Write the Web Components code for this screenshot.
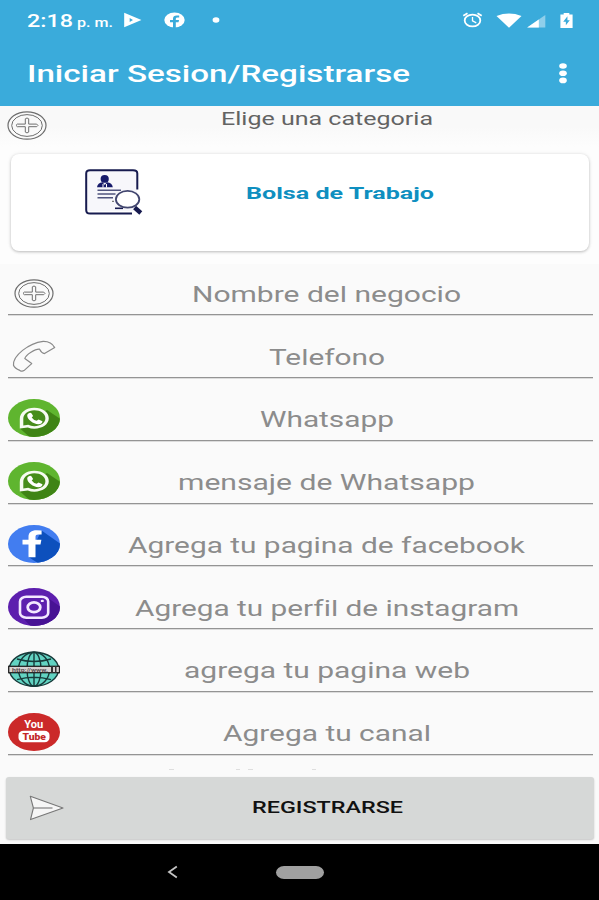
<!DOCTYPE html>
<html lang="es">
<head>
<meta charset="utf-8">
<meta name="viewport" content="width=device-width, initial-scale=1">
<title>Iniciar Sesion/Registrarse</title>
<style>
  html, body {
    margin: 0;
    height: 100%;
    overflow: hidden;
    font-family: Roboto, "Liberation Sans", sans-serif;
    background: #fafafa;
  }
</style>
</head>
<body>
<business-app></business-app>

<script>
const ICONS = {
  plus: `<svg viewBox="0 0 52 38" fill="none" stroke="#6e6e6e">
    <ellipse cx="26" cy="19.5" rx="19" ry="13.7" stroke-width="1.2"/>
    <ellipse cx="26" cy="19.5" rx="15.3" ry="10.9" stroke-width="1"/>
    <path stroke-width="1" d="M24.3 12.8q1.7-1.6 3.4 0v5.3h8q2.6 1.3 0 2.6h-8v5.4q-1.7 1.6-3.4 0v-5.4h-8q-2.6-1.3 0-2.6h8z"/></svg>`,
  phone: `<svg viewBox="0 0 52 38" fill="none" stroke="#8a8a8a" stroke-width="1.2" stroke-linejoin="round">
    <path d="M5.5 28.2C4.8 18.6 20.5 6.2 35.2 4.3C41 4.2 44.3 6 46.7 10.6L36.5 16.6C34.3 16.3 32.7 14.4 31.6 12.2C27.3 11.8 17.8 17.4 16.8 21.6L23.7 26.6L16 33.6Q14 34.8 11.8 33.4C8.4 31.9 6.3 30.5 5.5 28.2Z"/></svg>`,
  whatsapp: `<svg viewBox="0 0 52 38">
    <defs><clipPath id="c"><ellipse cx="26" cy="19" rx="26" ry="18.9"/></clipPath></defs>
    <ellipse cx="26" cy="19" rx="26" ry="18.9" fill="#5fb52f"/>
    <path clip-path="url(#c)" fill="#3f8415" d="M39 11L60 25V42H26L12 29.5Z"/>
    <path fill="#f7fbf2" d="M11.8 29.6V20C11.8 13.5 18 8.8 26.3 8.8S40.8 13.4 40.8 19.3S34.4 29.7 26.3 29.7Q22.8 29.7 19.8 28.5Z"/>
    <path fill="#478d1b" d="M15.3 26.5V19.8C15.3 15 20 11.3 26.3 11.3S37.4 14.8 37.4 19.3S32.5 27.2 26.3 27.2Q23 27.2 20.2 25.8Z"/>
    <path fill="#fff" d="M20.8 14.2q1.6-.7 2.6 0l1.6 2.6q-.2 1.1-1.3 1.7q1.5 2.4 5 3.3l1.8-1.2l4 1.6q-.4 3-4.1 3.1C25 24.9 19.5 20.7 19.2 16.8Q19.1 15.1 20.8 14.2Z"/></svg>`,
  facebook: `<svg viewBox="0 0 52 38">
    <defs><clipPath id="c"><ellipse cx="26" cy="19" rx="26" ry="18.9"/></clipPath></defs>
    <ellipse cx="26" cy="19" rx="26" ry="18.9" fill="#427df0"/>
    <path clip-path="url(#c)" fill="#0d50bd" d="M33.5 5.5L60 24V42H36L20.5 32Z"/>
    <path fill="#fff" d="M20.5 32.3V19.5H14.5V14.8H20.5V11.8C20.5 7.4 23.4 5.2 28.6 5.2Q31.5 5.2 33.6 5.6V9.4H30.4Q27.5 9.4 27.5 11.8V14.8H33.4L32.5 19.5H27.5V32.3Z"/></svg>`,
  instagram: `<svg viewBox="0 0 52 38">
    <defs><clipPath id="c"><ellipse cx="26" cy="19" rx="26" ry="18.9"/></clipPath></defs>
    <ellipse cx="26" cy="19" rx="26" ry="18.9" fill="#5d1fae"/>
    <path clip-path="url(#c)" fill="#471294" d="M40 10L60 24V42H26L14 29Z"/>
    <rect x="12" y="8.7" width="28.2" height="21" rx="6.3" ry="4.8" fill="#5d1fae" stroke="#f4e8ff" stroke-width="2.6"/>
    <ellipse cx="26" cy="19.3" rx="6.3" ry="4.9" fill="none" stroke="#f4e8ff" stroke-width="2.8"/>
    <ellipse cx="34.3" cy="12.9" rx="1.6" ry="1.2" fill="#f4e8ff"/></svg>`,
  globe: `<svg viewBox="0 0 52 38">
    <g fill="#62d3c2" stroke="#173a3a" stroke-width="1.4">
      <ellipse cx="26" cy="19.2" rx="24.6" ry="17"/>
      <g fill="none"><ellipse cx="26" cy="19.2" rx="15.5" ry="17"/>
      <ellipse cx="26" cy="19.2" rx="7" ry="17"/>
      <path d="M26 2v34M9 9q17 5 34 0M9 29.7q17-5 34 0"/></g>
    </g>
    <rect x=".7" y="16.3" width="50.8" height="6.4" fill="#d8d2d2" stroke="#222" stroke-width="1.3"/>
    <text x="4" y="21.5" font-size="5.6" font-weight="700" fill="#5c4d50" textLength="36" lengthAdjust="spacingAndGlyphs">http://www.</text>
    <path fill="#333" d="M43 16h2v7h-2zM47 16h1.5v7H47z"/></svg>`,
  youtube: `<svg viewBox="0 0 52 38">
    <ellipse cx="26" cy="19" rx="26" ry="18.9" fill="#cb2929"/>
    <text x="16.3" y="15.4" font-size="11.4" font-weight="700" fill="#fff" textLength="19" lengthAdjust="spacingAndGlyphs">You</text>
    <rect x="10.5" y="17.8" width="31" height="11.4" rx="5" ry="4.2" fill="#fff"/>
    <text x="14.5" y="26.5" font-size="8.4" font-weight="900" fill="#c32828" textLength="23.5" lengthAdjust="spacingAndGlyphs">Tube</text></svg>`,
  resume: `<svg viewBox="0 0 60 50" fill="none" stroke="#171b4f">
    <path fill="#f7f7fb" stroke="none" d="M4 4h50v40H4z"/>
    <path stroke-width="2" d="M54.3 22.5V6.5Q54.3 3.3 50 3.3H7Q3.2 3.3 3.2 6.5V43Q3.2 46.6 7 46.6H49"/>
    <ellipse cx="21.7" cy="11.9" rx="4.1" ry="3.9" fill="#171b6b" stroke="none"/>
    <path fill="#171b6b" stroke="none" d="M14 20.3Q14.6 15.6 19.6 15.3L21.7 18L24 15.3Q29.2 15.6 29.8 20.3Z"/>
    <path stroke="#fff" stroke-width="1" d="M20 17v3.5M23.5 17v3.5"/>
    <path stroke="#51557f" stroke-width="1.5" d="M14.5 23.3H38M14.5 26.9H32.5M14.5 30.8H30"/>
    <path stroke="#777" stroke-width="1.2" d="M29 34.3h2"/>
    <path stroke-width="1.6" d="M32 41.3h8"/>
    <ellipse cx="44.6" cy="32.3" rx="11.7" ry="8.4" fill="#fff" stroke="#42466f" stroke-width="1.8"/>
    <path stroke-width="4.4" d="M51.6 40.5L57.8 46"/></svg>`,
  send: `<svg viewBox="0 0 36 26" fill="#f6f6f6" stroke="#777" stroke-width="1.1" stroke-linejoin="round">
    <path d="M1.3 1.3L34 13L1.5 24.6L4.4 13Z"/><path d="M4.4 13H23.5"/></svg>`,
  play: `<svg viewBox="0 0 19 17"><path fill="#fff" d="M.7.8L19 8.5L.7 16.2Z"/><path fill="#3aabdb" d="M6.5 6.4L10 8.5L6.5 10.6Z"/></svg>`,
  fbround: `<svg viewBox="0 0 21 16"><ellipse cx="10.5" cy="8" rx="10.2" ry="7.4" fill="#fff"/>
    <path fill="#3aabdb" d="M9 16v-5.7H6V8h3V6.6Q9 3.4 12.8 3.4h2.4v2h-1.7q-1.7 0-1.7 1.3V8h3.3l-.6 2.3h-2.7V16z"/></svg>`,
  dot: `<svg viewBox="0 0 8 6"><ellipse cx="4" cy="3" rx="3.4" ry="2.7" fill="#fff"/></svg>`,
  alarm: `<svg viewBox="0 0 22 17" fill="none" stroke="#fff"><ellipse cx="11" cy="9" rx="8.3" ry="6.3" stroke-width="1.9"/>
    <path stroke-width="1.9" d="M1.2 4.1L5.7 1.2M20.8 4.1L16.3 1.2"/><path stroke-width="1.4" d="M11 5.3v4.2l4 2"/></svg>`,
  wifi: `<svg viewBox="0 0 26 15"><path fill="#fff" d="M.5 2.9Q13-2 25.5 2.9L13 14.7Z"/></svg>`,
  signal: `<svg viewBox="0 0 20 14"><path fill="#8fcfeb" d="M20 0v13.5H.5Z"/><path fill="#fff" d="M13 4.8v8.7H.5Z"/></svg>`,
  battery: `<svg viewBox="0 0 13 16"><path fill="#fff" d="M3.5 0h6v1.5H13V16H0V1.5h3.5z"/><path fill="#3aabdb" d="M7.5 3.5L3 9.2h2.8V13L10 7.8H7.5z"/></svg>`,
  more: `<svg viewBox="0 0 8 21" fill="#fff"><ellipse cx="4" cy="3" rx="3.8" ry="2.8"/><ellipse cx="4" cy="10.2" rx="3.8" ry="2.8"/><ellipse cx="4" cy="17.4" rx="3.8" ry="2.8"/></svg>`,
  back: `<svg viewBox="0 0 11 14" fill="none" stroke="#c4c4c4" stroke-width="1.8"><path d="M9.8 1.5L2 7l7.8 5.5"/></svg>`
};

class AppIcon extends HTMLElement {
  connectedCallback() {
    if (!this.shadowRoot) this.attachShadow({ mode: 'open' });
    this.shadowRoot.innerHTML = `
      <style>
        :host { display: block; flex: none; }
        svg { display: block; width: 100%; height: 100%; }
      </style>
      ${ICONS[this.getAttribute('name')] || ''}
    `;
  }
}

customElements.define('app-icon', AppIcon);

// Text widened horizontally until it fills the given width.
class WideText extends HTMLElement {
  constructor() {
    super();
    this.attachShadow({ mode: 'open' });
    this.shadowRoot.innerHTML = `
      <style>
        :host { display: block; flex: none; line-height: 1; }
        span { display: inline-block; white-space: nowrap; transform-origin: 0 50%; font-variant-ligatures: none; }
      </style>
      <span><slot></slot></span>
    `;
  }

  connectedCallback() {
    const width = Number(this.getAttribute('width'));
    const span = this.shadowRoot.querySelector('span');
    this.style.width = width + 'px';
    const natural = span.getBoundingClientRect().width;
    if (natural) span.style.transform = `scaleX(${width / natural})`;
  }
}

customElements.define('wide-text', WideText);

class StatusBar extends HTMLElement {
  constructor() {
    super();
    this.attachShadow({ mode: 'open' });
    this.shadowRoot.innerHTML = `
      <style>
        :host { display: flex; align-items: center; height: 40px; padding: 0 26px 0 27px; color: #fff; box-sizing: border-box; }
        .clock { display: flex; align-items: baseline; flex: none; gap: 4px; padding-top: 4px; font-weight: 500; }
        .time { font-size: 17.5px; }
        .half { font-size: 12.5px; }
        .notes { display: flex; align-items: center; flex: none; gap: 22px; margin-left: 9px; }
        .system { display: flex; align-items: center; margin-left: auto; }
      </style>
      <div class="clock">
        <wide-text class="time" width="46">2:18</wide-text>
        <wide-text class="half" width="36">p. m.</wide-text>
      </div>
      <div class="notes">
        <app-icon name="play" style="width:19px;height:16px;margin-left:1px"></app-icon>
        <app-icon name="fbround" style="width:21px;height:16px"></app-icon>
        <app-icon name="dot" style="width:8px;height:6px;margin-left:5px"></app-icon>
      </div>
      <div class="system">
        <app-icon name="alarm" style="width:21px;height:16px"></app-icon>
        <app-icon name="wifi" style="width:26px;height:15px;margin-left:13px"></app-icon>
        <app-icon name="signal" style="width:20px;height:13px;margin:2px 0 0 4px"></app-icon>
        <app-icon name="battery" style="width:13px;height:15px;margin:1px 0 0 14px"></app-icon>
      </div>
    `;
  }
}

customElements.define('status-bar', StatusBar);

class AppBar extends HTMLElement {
  constructor() {
    super();
    this.attachShadow({ mode: 'open' });
    this.shadowRoot.innerHTML = `
      <style>
        :host { display: flex; align-items: center; justify-content: space-between; height: 66px; padding: 0 32px 0 27px; box-sizing: border-box; color: #fff; font-size: 24px; font-weight: 500; }
        wide-text { padding-top: 2px; }
        app-icon { width: 8px; height: 21px; }
      </style>
      <wide-text width="383"><slot></slot></wide-text>
      <app-icon name="more"></app-icon>
    `;
  }
}

customElements.define('app-bar', AppBar);

class CategoryCard extends HTMLElement {
  constructor() {
    super();
    this.attachShadow({ mode: 'open' });
    this.shadowRoot.innerHTML = `
      <style>
        :host { display: block; height: 117px; padding: 7px 10px 13px 11px; box-sizing: border-box; background: #fdfdfd; }
        .card { display: flex; align-items: flex-start; height: 97px; padding: 13px 0 0 72px; box-sizing: border-box; background: #fff; border-radius: 8px; box-shadow: 0 1px 3px rgba(0, 0, 0, 0.24), 0 0 5px rgba(0, 0, 0, 0.06); }
        app-icon { width: 60px; height: 50px; }
        wide-text { margin: 18px 0 0 103px; color: #0f8fc0; font-size: 17px; font-weight: 700; }
      </style>
      <div class="card">
        <app-icon name="resume"></app-icon>
        <wide-text width="188"><slot></slot></wide-text>
      </div>
    `;
  }
}

customElements.define('category-card', CategoryCard);

class FieldRow extends HTMLElement {
  connectedCallback() {
    if (this.shadowRoot) return;
    this.attachShadow({ mode: 'open' });
    this.shadowRoot.innerHTML = `
      <style>
        :host { display: flex; align-items: flex-end; flex: none; height: 62.75px; margin: 0 6px 0 8px; padding-bottom: 2.5px; box-sizing: border-box; border-bottom: 1px solid #949494; box-shadow: 0 1px 0 #dcdcdc; }
        app-icon { width: 52px; height: 38px; }
        .hint { display: flex; justify-content: center; flex: 1; padding-bottom: 6.5px; color: #8c8c8c; font-size: 21.5px; }
      </style>
      <app-icon name="${this.getAttribute('icon')}"></app-icon>
      <div class="hint"><wide-text width="${this.getAttribute('width')}"><slot></slot></wide-text></div>
    `;
  }
}

customElements.define('field-row', FieldRow);

class SubmitButton extends HTMLElement {
  constructor() {
    super();
    this.attachShadow({ mode: 'open' });
    this.shadowRoot.innerHTML = `
      <style>
        :host { display: block; padding: 6px 5px 5px 6px; }
        button { display: flex; align-items: center; width: 100%; height: 62px; padding: 0 0 0 23px; border: 0; border-radius: 3px; background: #d6d8d7; box-shadow: 0 1px 2px rgba(0, 0, 0, 0.22); color: #111; font: 500 16.5px Roboto, sans-serif; }
        app-icon { width: 36px; height: 26px; margin-bottom: 1px; }
        wide-text { margin: 1px 0 0 187px; text-align: left; }
      </style>
      <button type="button">
        <app-icon name="send"></app-icon>
        <wide-text width="151"><slot></slot></wide-text>
      </button>
    `;
  }
}

customElements.define('submit-button', SubmitButton);

class NavBar extends HTMLElement {
  constructor() {
    super();
    this.attachShadow({ mode: 'open' });
    this.shadowRoot.innerHTML = `
      <style>
        :host { display: flex; align-items: center; height: 56px; padding-left: 167px; box-sizing: border-box; background: #000; }
        app-icon { width: 11px; height: 14px; }
        .home { width: 48px; height: 13px; margin-left: 98px; border-radius: 8px / 6.5px; background: #a0a0a0; }
      </style>
      <app-icon name="back"></app-icon>
      <div class="home"></div>
    `;
  }
}

customElements.define('nav-bar', NavBar);

class BusinessApp extends HTMLElement {
  constructor() {
    super();
    this.attachShadow({ mode: 'open' });
    this.shadowRoot.innerHTML = `
      <style>
        :host { display: flex; flex-direction: column; width: 599px; height: 900px; overflow: hidden; background: #fafafa; }
        header { flex: none; height: 106px; background: #3aabdb; }
        .category { display: flex; align-items: flex-start; flex: none; height: 41px; box-sizing: border-box; background: linear-gradient(#f9f9f9 50%, #fdfdfd); }
        .category app-icon { width: 52px; height: 38px; margin: 0 0 0 1px; }
        .category wide-text { margin: 4px 0 0 168px; color: #636363; font-size: 18.5px; }
        .fields { display: flex; flex-direction: column; flex: none; height: 507px; overflow: hidden; }
        .fields field-row:first-child { height: 51.25px; }
        .next { display: flex; margin: 14px 0 0 169px; }
        .next i { height: 1.5px; width: 5px; background: #dedede; }
        category-card, submit-button, nav-bar { flex: none; }
      </style>
      <header>
        <status-bar></status-bar>
        <app-bar>Iniciar Sesion/Registrarse</app-bar>
      </header>
      <div class="category">
        <app-icon name="plus"></app-icon>
        <wide-text width="212">Elige una categoria</wide-text>
      </div>
      <category-card>Bolsa de Trabajo</category-card>
      <div class="fields">
        <field-row icon="plus" width="269">Nombre del negocio</field-row>
        <field-row icon="phone" width="116">Telefono</field-row>
        <field-row icon="whatsapp" width="134">Whatsapp</field-row>
        <field-row icon="whatsapp" width="297">mensaje de Whatsapp</field-row>
        <field-row icon="facebook" width="397">Agrega tu pagina de facebook</field-row>
        <field-row icon="instagram" width="384">Agrega tu perfil de instagram</field-row>
        <field-row icon="globe" width="286">agrega tu pagina web</field-row>
        <field-row icon="youtube" width="208">Agrega tu canal</field-row>
        <div class="next">
          <i></i><i style="margin-left:62px;width:4px"></i><i style="margin-left:8px"></i><i style="margin-left:59px;width:4px"></i>
        </div>
      </div>
      <submit-button>REGISTRARSE</submit-button>
      <nav-bar></nav-bar>
    `;
  }
}

customElements.define('business-app', BusinessApp);
</script>
</body>
</html>
